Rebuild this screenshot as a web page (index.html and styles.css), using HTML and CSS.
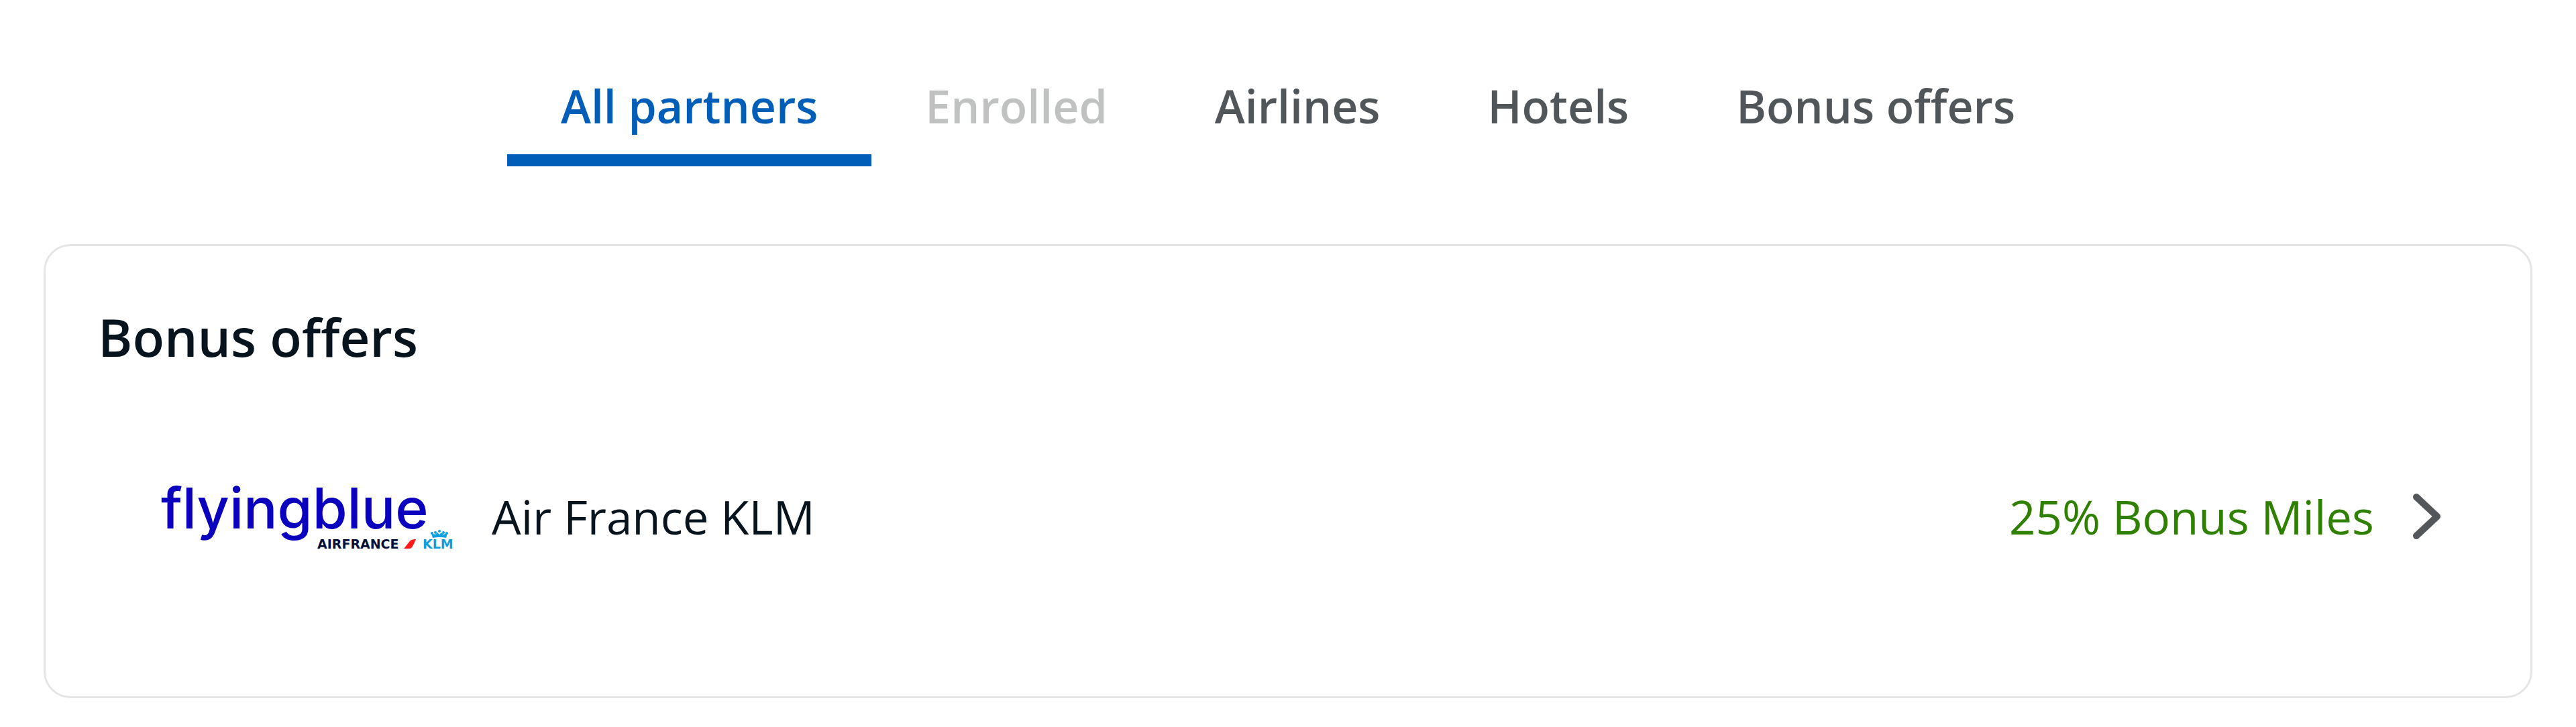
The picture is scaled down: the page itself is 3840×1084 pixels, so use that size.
FILE: index.html
```html
<!DOCTYPE html>
<html lang="en">
<head>
<meta charset="utf-8">
<meta name="viewport" content="width=device-width, initial-scale=1">
<title>Partners</title>
<link rel="stylesheet" href="styles.css">
</head>
<body>
<nav class="tabs" aria-label="Partner filter">
  <button class="tab tab-active" type="button">All partners</button>
  <button class="tab" type="button" disabled>Enrolled</button>
  <button class="tab" type="button">Airlines</button>
  <button class="tab" type="button">Hotels</button>
  <button class="tab" type="button">Bonus offers</button>
</nav>
<main class="card">
  <h2 class="card-title">Bonus offers</h2>
  <a class="offer" href="#air-france-klm">
    <svg class="offer-logo" viewBox="0 0 440 98" role="img" aria-label="Flying Blue, Air France KLM">
      <text class="logo-name" x="-1" y="67">flyingblue</text>
      <text class="logo-sub logo-af" x="232" y="97">AIRFRANCE</text>
      <path fill="#ff1a1a" d="M361 97h8c3 0 4-2 6-5l4-9c-5 0-8 1-10 4z"/>
      <text class="logo-sub logo-klm" x="389" y="97">KLM</text>
      <g fill="#0aa0e0">
        <path d="M404 81l-2-7 6 2 3-3 3 3 3-3 3 3 6-2-2 7q-10-2-20 0z"/>
        <circle cx="403" cy="74" r="2"/><circle cx="408" cy="73" r="2"/><circle cx="414" cy="71" r="2"/><circle cx="420" cy="73" r="2"/><circle cx="425" cy="74" r="2"/>
      </g>
    </svg>
    <span class="offer-name">Air France KLM</span>
    <span class="offer-bonus">25% Bonus Miles</span>
    <svg class="offer-arrow" viewBox="0 0 42 68" aria-hidden="true">
      <path d="M5 5L36 34L5 63" fill="none" stroke="#53575b" stroke-width="10" stroke-linecap="round" stroke-linejoin="round"/>
    </svg>
  </a>
</main>
</body>
</html>
```
FILE: styles.css
```css
body {
  margin: 0;
  background: #fff;
  color: #07131d;
  font-family: "Open Sans", "Noto Sans", sans-serif;
}

.tabs {
  display: flex;
  justify-content: center;
  padding-top: 110px;
}

.tab {
  padding: 0 80px 24px;
  border: 0;
  border-bottom: 18px solid transparent;
  background: none;
  color: #50565a;
  font: 600 68px/96px "Open Sans", "Noto Sans", sans-serif;
  white-space: nowrap;
}

.tab:disabled {
  color: #c0c2c2;
}

.tab-active {
  border-bottom-color: #005eb8;
  color: #005eb8;
}

.card {
  margin: 116px 65px 40px;
  padding: 80px 78px 219px;
  border: 3px solid #e4e6e6;
  border-radius: 40px;
}

.card-title {
  margin: 0 0 164px;
  font-size: 78px;
  font-weight: 600;
  line-height: 110px;
}

.offer {
  display: flex;
  align-items: center;
  padding: 0 55px 0 95px;
  color: inherit;
  font-size: 69px;
  line-height: 96px;
  text-decoration: none;
}

.offer-logo {
  flex: none;
  width: 440px;
  height: 98px;
  margin-right: 52px;
  overflow: visible;
}

.logo-name {
  fill: #0a00bd;
  font: 500 84px Inter, sans-serif;
}

.logo-sub {
  font: bold 19px "DejaVu Sans", sans-serif;
}

.logo-af {
  fill: #051039;
}

.logo-klm {
  fill: #0aa0e0;
}

.offer-bonus {
  margin-left: auto;
  color: #308000;
}

.offer-arrow {
  flex: none;
  width: 42px;
  height: 68px;
  margin-left: 58px;
}
```
